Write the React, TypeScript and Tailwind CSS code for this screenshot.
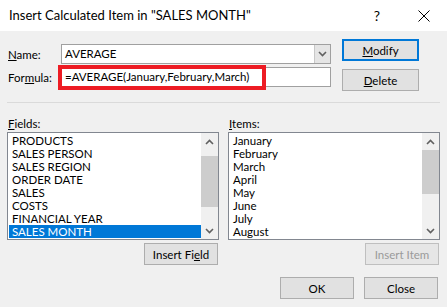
import React from 'react';

const fields = [
  'PRODUCTS',
  'SALES PERSON',
  'SALES REGION',
  'ORDER DATE',
  'SALES',
  'COSTS',
  'FINANCIAL YEAR',
  'SALES MONTH',
];

const items = ['January', 'February', 'March', 'April', 'May', 'June', 'July', 'August'];

function Chevron({ up }: { up?: boolean }) {
  return (
    <svg width="9" height="6" viewBox="0 0 9 6" className="block">
      <path
        d={up ? 'M1 5 L4.5 1.5 L8 5' : 'M1 1 L4.5 4.5 L8 1'}
        fill="none"
        stroke="#606060"
        strokeWidth="1.6"
      />
    </svg>
  );
}

function Scrollbar({ thumbTop, thumbHeight }: { thumbTop: number; thumbHeight: number }) {
  return (
    <div className="w-[17px] h-full bg-[#f0f0f0] flex flex-col">
      <div className="h-[17px] flex items-center justify-center">
        <Chevron up />
      </div>
      <div className="flex-1 relative">
        <div
          className="absolute left-0 right-0 bg-[#cdcdcd]"
          style={{ top: thumbTop, height: thumbHeight }}
        />
      </div>
      <div className="h-[17px] flex items-center justify-center">
        <Chevron />
      </div>
    </div>
  );
}

function ListBox({
  rows,
  selected,
  thumbTop,
  thumbHeight,
}: {
  rows: string[];
  selected?: number;
  thumbTop: number;
  thumbHeight: number;
}) {
  return (
    <div className="w-[212px] h-[108px] border border-[#828790] bg-white flex">
      <div className="flex-1 pt-px pl-px overflow-hidden">
        {rows.map((r, i) => (
          <div
            key={r}
            className={`h-[13px] leading-[13px] pl-[3px] whitespace-nowrap ${
              i === selected ? 'bg-[#0078d7] text-white' : 'text-black'
            }`}
          >
            {r}
          </div>
        ))}
      </div>
      <Scrollbar thumbTop={thumbTop} thumbHeight={thumbHeight} />
    </div>
  );
}

function Button({
  children,
  width = 'w-[74px]',
  isDefault,
  disabled,
}: {
  children: React.ReactNode;
  width?: string;
  isDefault?: boolean;
  disabled?: boolean;
}) {
  return (
    <div
      className={`${width} h-[22px] flex items-center justify-center ${
        isDefault
          ? 'border-2 border-[#0078d7] bg-[#e1e1e1] text-black'
          : disabled
          ? 'border border-[#bfbfbf] bg-[#e6e6e6] text-[#9a9a9a]'
          : 'border border-[#adadad] bg-[#e1e1e1] text-black'
      }`}
    >
      {children}
    </div>
  );
}

export default function App() {
  return (
    <div
      className="w-[447px] h-[307px] bg-[#f0f0f0] text-[11.5px] leading-[13px] text-black overflow-hidden flex flex-col"
      style={{ fontFamily: 'Lato, "Liberation Sans", sans-serif' }}
    >
      {/* title bar */}
      <div className="h-[31px] bg-white flex items-center pl-[9px] shrink-0">
        <span className="text-[13px] leading-none">Insert Calculated Item in "SALES MONTH"</span>
        <span className="ml-auto text-[14px] leading-none mr-[38px]">?</span>
        <svg width="12" height="12" viewBox="0 0 12 12" className="mr-[17px]">
          <path d="M0.5 0.5 L11.5 11.5 M11.5 0.5 L0.5 11.5" stroke="#000" strokeWidth="1" />
        </svg>
      </div>

      {/* name / formula */}
      <div className="flex pt-[8px] pl-[8px]">
        <div className="flex flex-col gap-[3px] pt-[5px]">
          <div className="flex items-center h-[20px]">
            <span className="w-[53px]">
              <u>N</u>ame:
            </span>
            <div className="w-[270px] h-[20px] border border-[#a0a0a0] bg-white flex">
              <span className="flex-1 pl-[3px] leading-[18px]">AVERAGE</span>
              <div className="w-[16px] h-full bg-[#e5e5e5] border-l border-[#c8c8c8] flex items-center justify-center">
                <Chevron />
              </div>
            </div>
          </div>
          <div className="flex items-center h-[20px]">
            <span className="w-[53px]">
              For<u>m</u>ula:
            </span>
            <div className="relative w-[270px] h-[20px] border border-[#a0a0a0] bg-white">
              <span className="pl-[3px] leading-[18px] whitespace-nowrap">=AVERAGE(January,February,March)</span>
              <div className="absolute left-[-4px] top-[-3px] w-[208px] h-[25px] border-[4px] border-[#ed1c24]" />
            </div>
          </div>
        </div>
        <div className="flex flex-col gap-[8px] ml-[11px]">
          <Button width="w-[77px]" isDefault>
            <span>
              <u>M</u>odify
            </span>
          </Button>
          <Button width="w-[77px]">
            <span>
              <u>D</u>elete
            </span>
          </Button>
        </div>
      </div>

      {/* separator */}
      <div className="mx-[7px] mt-[11px] h-px bg-[#dadada]" />

      {/* lists */}
      <div className="flex gap-[9px] pl-[7px] mt-[13px]">
        <div className="flex flex-col">
          <span className="h-[16px] leading-[16px] pl-px">
            <u>F</u>ields:
          </span>
          <ListBox rows={fields} selected={7} thumbTop={6} thumbHeight={51} />
          <div className="flex justify-end mt-[3px] pr-px">
            <Button>
              <span>
                Insert Fi<u>e</u>ld
              </span>
            </Button>
          </div>
        </div>
        <div className="flex flex-col">
          <span className="h-[16px] leading-[16px] pl-px">
            <u>I</u>tems:
          </span>
          <ListBox rows={items} thumbTop={0} thumbHeight={44} />
          <div className="flex justify-end mt-[3px] pr-px">
            <Button disabled>Insert Item</Button>
          </div>
        </div>
      </div>

      {/* OK / Close */}
      <div className="flex justify-end gap-[10px] pr-[9px] mt-[12px]">
        <Button>OK</Button>
        <Button>Close</Button>
      </div>
    </div>
  );
}
